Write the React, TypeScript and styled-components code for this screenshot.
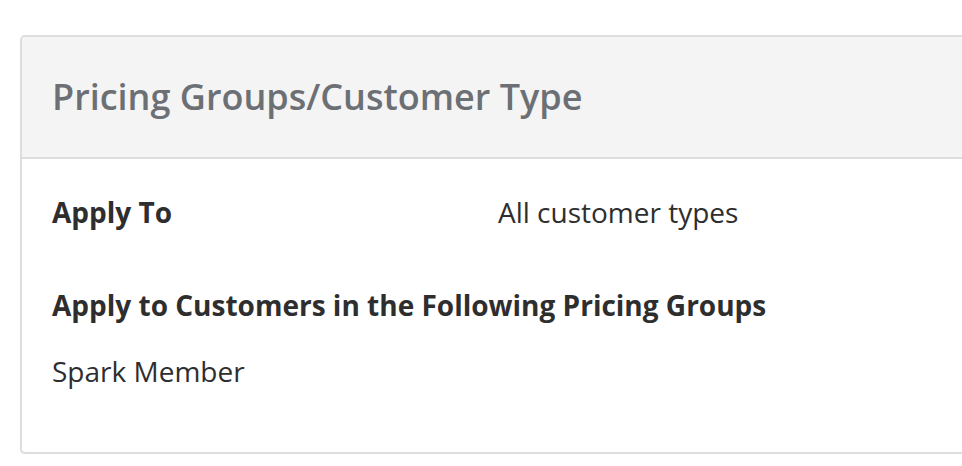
import React from "react";
import styled, { createGlobalStyle } from "styled-components";

const GlobalStyle = createGlobalStyle`
  html, body {
    margin: 0;
    padding: 0;
    background: #ffffff;
    overflow: hidden;
  }
  body {
    font-family: "Open Sans", "Liberation Sans", sans-serif;
    color: #333333;
  }
`;

const Page = styled.div`
  padding: 35px 0 0 20px;
`;

const Card = styled.section`
  margin-right: -20px;
  border: 2px solid #dddddd;
  border-radius: 5px;
  background: #ffffff;
  overflow: hidden;
  box-shadow: 0 1px 1px rgba(0, 0, 0, 0.04);
`;

const CardHeader = styled.header`
  background: #f4f4f4;
  border-bottom: 2px solid #dddddd;
  padding: 34px 30px;
`;

const Title = styled.h2`
  margin: 0;
  font-size: 36px;
  line-height: 52px;
  font-weight: 600;
  color: #6c7074;
`;

const CardBody = styled.div`
  padding: 33px 30px 61px 30px;
`;

const Row = styled.div`
  display: grid;
  grid-template-columns: 446px 1fr;
  margin-bottom: 53px;
`;

const Label = styled.div`
  font-size: 28px;
  line-height: 40px;
  font-weight: 700;
  color: #2e2e2e;
`;

const Value = styled.div`
  font-size: 28px;
  line-height: 40px;
  font-weight: 400;
  color: #2e2e2e;
`;

const SectionHeading = styled.div<{ $gap?: number }>`
  font-size: 28px;
  line-height: 40px;
  font-weight: 700;
  color: #2e2e2e;
  margin-bottom: ${(p) => p.$gap ?? 0}px;
`;

export default function App() {
  return (
    <>
      <GlobalStyle />
      <Page>
        <Card>
          <CardHeader>
            <Title>Pricing Groups/Customer Type</Title>
          </CardHeader>
          <CardBody>
            <Row>
              <Label>Apply To</Label>
              <Value>All customer types</Value>
            </Row>
            <SectionHeading $gap={26}>
              Apply to Customers in the Following Pricing Groups
            </SectionHeading>
            <Value>Spark Member</Value>
          </CardBody>
        </Card>
      </Page>
    </>
  );
}
